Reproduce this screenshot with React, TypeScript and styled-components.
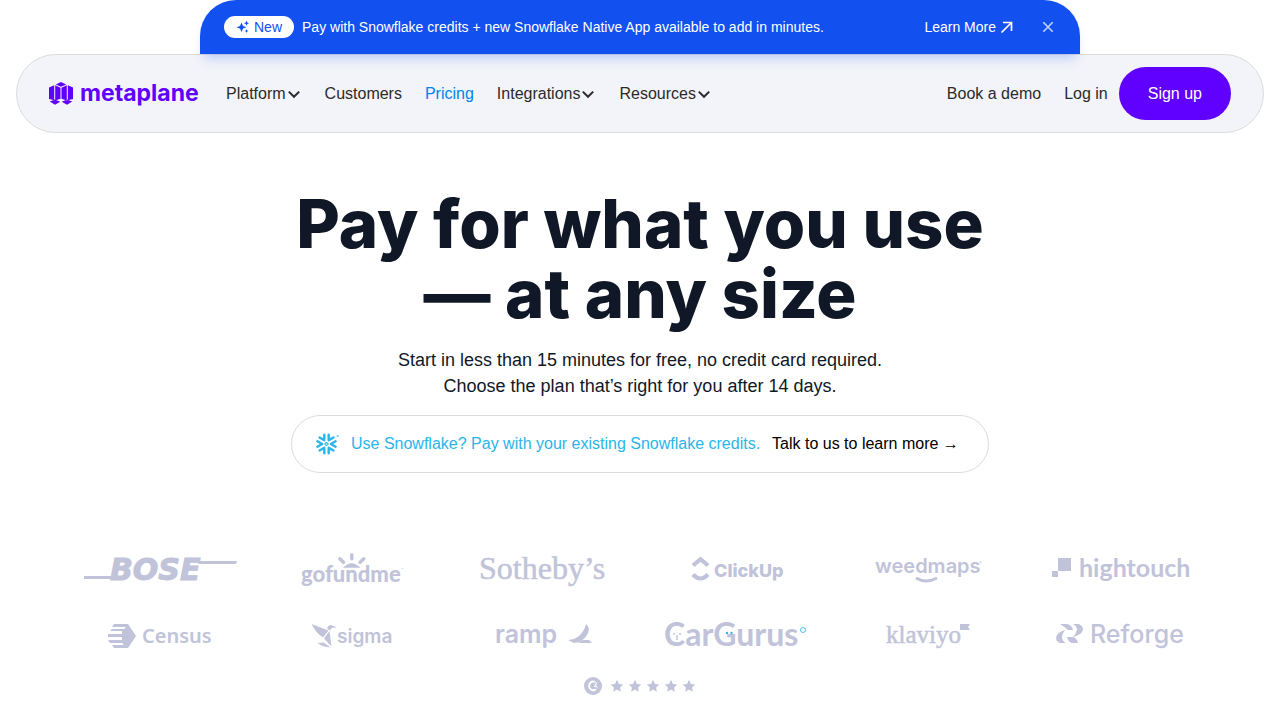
import React from "react";
import styled, { createGlobalStyle } from "styled-components";

const sans = '"Liberation Sans", Arial, sans-serif';
const grotesk = 'Inter, "Liberation Sans", sans-serif';
const muted = "#c0c3d9";

const GlobalStyle = createGlobalStyle`
  *, *::before, *::after { box-sizing: border-box; }
  html { overflow-x: hidden; }
  body { margin: 0; background: #fff; color: #101828; font-family: ${sans}; font-size: 16px; }
  a { color: inherit; text-decoration: none; }
  button { font: inherit; color: inherit; background: none; border: 0; padding: 0; cursor: pointer; }
  svg { display: block; flex: none; }
`;

const Banner = styled.aside`
  position: relative;
  z-index: 1;
  display: flex;
  align-items: center;
  gap: 8px;
  max-width: 880px;
  height: 54px;
  margin: 0 auto;
  padding: 0 24px;
  border-radius: 36px 36px 0 0;
  background: #1250f0;
  color: #fff;
  font-size: 14px;
  box-shadow: 0 8px 12px -4px rgba(18, 80, 240, 0.25);
`;

const NewTag = styled.span`
  display: flex;
  align-items: center;
  gap: 4px;
  height: 22px;
  padding: 0 12px;
  border-radius: 11px;
  background: #fff;
  color: #1250f0;
`;

const BannerText = styled.p`
  flex: 1;
  margin: 0;
`;

const BannerLink = styled.a`
  display: flex;
  align-items: center;
  gap: 4px;
`;

const CloseButton = styled.button`
  margin-left: 18px;
  opacity: 0.75;
`;

const Header = styled.header`
  display: flex;
  align-items: center;
  gap: 26px;
  height: 79px;
  margin: 0 16px;
  padding: 0 32px;
  border: 1px solid #dcdcdc;
  border-radius: 40px;
  background: #f3f4f9;
  color: #2b2b2b;
`;

const Nav = styled.nav`
  display: flex;
  flex: 1;
  align-items: center;
  gap: 23px;
`;

const NavLink = styled.a<{ $active?: boolean }>`
  color: ${(p) => (p.$active ? "#0082f3" : "inherit")};
`;

const NavMenu = styled.button`
  display: flex;
  align-items: center;
`;

const Actions = styled.div`
  display: flex;
  align-items: center;
  gap: 23px;
`;

const AccountLinks = styled.div`
  display: flex;
  align-items: center;
  gap: 11px;
`;

const SignUp = styled.a`
  display: flex;
  align-items: center;
  height: 53px;
  padding: 0 29px;
  border-radius: 27px;
  background: #6000ff;
  color: #fff;
`;

const Hero = styled.section`
  display: flex;
  flex-direction: column;
  align-items: center;
  padding: 56px 24px 64px;
  text-align: center;
`;

const Title = styled.h1`
  margin: 0;
  font-family: ${grotesk};
  font-size: 67px;
  font-weight: 800;
  line-height: 70px;
`;

const Lead = styled.p`
  margin: 18px 0 16px;
  font-size: 18px;
  line-height: 26px;
`;

const CreditsPill = styled.a`
  display: flex;
  align-items: center;
  gap: 12px;
  width: 100%;
  max-width: 698px;
  min-height: 58px;
  padding: 0 24px;
  border: 1px solid #dcdcdc;
  border-radius: 29px;
  color: #000;
`;

const Accent = styled.span`
  color: #29b5e8;
`;

const Customers = styled.ul`
  display: grid;
  grid-template-columns: repeat(6, 1fr);
  margin: 0 64px;
  padding: 0;
  list-style: none;
`;

const Customer = styled.li`
  display: flex;
  align-items: center;
  justify-content: center;
  height: 66px;
`;

const Rating = styled.div`
  display: flex;
  align-items: center;
  justify-content: center;
  gap: 8px;
  padding: 8px 0 24px;
`;

const Stars = styled.div`
  display: flex;
  gap: 4px;
`;

const Logo = ({ children, label }: { children: React.ReactNode; label: string }) => (
  <Customer>
    <svg width="160" height="40" viewBox="0 0 160 40" fill={muted} role="img" aria-label={label} overflow="visible">
      {children}
    </svg>
  </Customer>
);

const Chevron = () => (
  <svg width="16" height="16" viewBox="0 0 16 16" fill="none" stroke="#2b2b2b" strokeWidth="2">
    <path d="M2.800 5.600 8 10.800l5.200-5.200" />
  </svg>
);

const Brand = () => (
  <svg width="151" height="30" viewBox="0 0 151 30" fill="#6000ff" role="img" aria-label="metaplane">
    <path d="M6.800 5.400 12 3l5.200 2.400L12 7.700zM0 8.500 5.200 6.200V21.300L0 20zM24 8.500l-5.200-2.300v15.100L24 20zM6.200 6.300l5.300 2.500v11L6.200 21.600zM17.800 6.300l-5.300 2.500v11l5.300 1.800zM.8 22.600l5-2 5.400 2.200-5.200 3zM12.800 22.800l5.400-2.200 5 2-5.200 3.200z" />
    <text x="31" y="22" fontFamily="Inter" fontSize="23" fontWeight="700">metaplane</text>
  </svg>
);

const Sparkles = () => (
  <svg width="14" height="14" viewBox="0 0 14 14" fill="#1250f0">
    <path d="M5.500 2.500 7 6l3.500 1.300L7 8.600 5.500 12 4 8.600.5 7.300 4 6zM10.500.8l.8 1.600 1.700.8-1.700.8-.8 1.600-.8-1.600L8 3.200l1.700-.8zM10.500 9l.6 1.400 1.400.6-1.400.6-.6 1.400-.6-1.400-1.400-.6 1.400-.6z" />
  </svg>
);

const Snowflake = () => (
  <svg width="23" height="22" viewBox="0 0 23 22" fill="none" stroke="#29b5e8" strokeWidth="2.400" strokeLinecap="round" strokeLinejoin="round">
    {[30, 90, 150, 210, 270, 330].map((angle) => (
      <path key={angle} transform={`rotate(${angle} 10.500 11)`} d="M7.750 1.900 10.500 6.600l2.750-4.700" />
    ))}
    <path d="M10.500 9.300 12.200 11l-1.700 1.700L8.800 11z" strokeWidth="1.100" />
    <circle cx="21.500" cy="3" r=".6" strokeWidth=".6" />
  </svg>
);

const Star = () => (
  <svg width="14" height="14" viewBox="0 0 14 14" fill={muted}>
    <path d="M7 .8 8.900 4.900l4.400.5L10 8.400l.9 4.400L7 10.600l-3.900 2.200L4 8.400.700 5.400l4.400-.5z" />
  </svg>
);

export default function App() {
  return (
    <>
      <GlobalStyle />
      <Banner>
        <NewTag><Sparkles />New</NewTag>
        <BannerText>Pay with Snowflake credits + new Snowflake Native App available to add in minutes.</BannerText>
        <BannerLink href="#">
          Learn More
          <svg width="14" height="14" viewBox="0 0 14 14" fill="none" stroke="#fff" strokeWidth="1.700">
            <path d="M1.500 12.500 11.500 2.500M3 2.500h8.500v8.500" />
          </svg>
        </BannerLink>
        <CloseButton aria-label="Close">
          <svg width="16" height="16" viewBox="0 0 16 16" stroke="#fff" strokeWidth="1.600">
            <path d="m3.300 3.300 9.400 9.400m0-9.400-9.400 9.400" />
          </svg>
        </CloseButton>
      </Banner>
      <Header>
        <a href="#"><Brand /></a>
        <Nav>
          <NavMenu>Platform<Chevron /></NavMenu>
          <NavLink href="#">Customers</NavLink>
          <NavLink href="#" $active>Pricing</NavLink>
          <NavMenu>Integrations<Chevron /></NavMenu>
          <NavMenu>Resources<Chevron /></NavMenu>
        </Nav>
        <Actions>
          <NavLink href="#">Book a demo</NavLink>
          <AccountLinks>
            <NavLink href="#">Log in</NavLink>
            <SignUp href="#">Sign up</SignUp>
          </AccountLinks>
        </Actions>
      </Header>
      <main>
        <Hero>
          <Title>Pay for what you use<br />— at any size</Title>
          <Lead>
            Start in less than 15 minutes for free, no credit card required.<br />
            Choose the plan that’s right for you after 14 days.
          </Lead>
          <CreditsPill href="#">
            <Snowflake />
            <Accent>Use Snowflake? Pay with your existing Snowflake credits.</Accent>
            <span>Talk to us to learn more →</span>
          </CreditsPill>
        </Hero>
        <Customers>
          <Logo label="Bose">
            <path d="M4 26h33l-2 3H4zM119 11h38l-1 3h-38z" />
            <text x="30" y="30" fontFamily="DejaVu Sans" fontWeight="700" fontStyle="italic" fontSize="30" stroke={muted} strokeWidth="1">BOSE</text>
          </Logo>
          <Logo label="GoFundMe">
            <text x="29" y="32" fontFamily="Lato" fontWeight="900" fontSize="22">gofundme</text>
            <path d="M71 17.800Q79.500 8.500 88.500 17.800z" />
            <path d="M79.800 4.800v4M67.800 8.800l3.700 3.500M91.800 8.800l-3.700 3.500" stroke={muted} strokeWidth="3.400" strokeLinecap="round" />
            <text x="129" y="21" fontFamily="Inter" fontSize="4">™</text>
          </Logo>
          <Logo label="Sotheby’s">
            <text x="15" y="29" fontFamily="Liberation Serif" fontSize="32" stroke={muted} strokeWidth=".5">Sotheby’s</text>
          </Logo>
          <Logo label="ClickUp">
            <path d="m37 15.500 7.500-6.300 7.500 6.300M37 24.500q7.500 8 15 0" fill="none" stroke={muted} strokeWidth="4.200" />
            <text x="58" y="27" fontFamily="Inter" fontWeight="800" fontSize="18">ClickUp</text>
          </Logo>
          <Logo label="Weedmaps">
            <text x="27" y="23" fontFamily="Inter" fontWeight="600" fontSize="20">weedmaps</text>
            <path d="M68 28q10 6 21 0" fill="none" stroke={muted} strokeWidth="3" />
            <text x="131" y="14" fontFamily="Inter" fontSize="4">®</text>
          </Logo>
          <Logo label="Hightouch">
            <path d="M18 8h13v13H18zM12 21h6v6h-6z" />
            <text x="39" y="27" fontFamily="Lato" fontWeight="700" fontSize="25">hightouch</text>
          </Logo>
          <Logo label="Census">
            <path d="M34 8h14l8 12-8 12H34l-2-3h12l-2-2H30l-2-3h14v-3H28v-3h14v-3H30l2-2h12l2-2H32z" />
            <text x="62" y="27" fontFamily="Noto Sans" fontWeight="600" fontSize="20">Census</text>
          </Logo>
          <Logo label="Sigma">
            <path d="m39.500 8 17 6.500L51 21.500q-7-4.500-11.500-13.500zM52 22.500l5.500-7.500 2 15.500zM45.500 27l6-.5 7 5q-8-.5-13-4.500zM55 12.500q1-3.500 4-3.500l6 2.500-5 .2-2 2.800z" />
            <text x="65" y="27" fontFamily="Inter" fontWeight="600" fontSize="19">sigma</text>
          </Logo>
          <Logo label="Ramp">
            <text x="31" y="27" fontFamily="Inter" fontWeight="600" fontSize="25">ramp</text>
            <path d="M122 8q5 4 1 11-4 7-13 8l-6-3q14-1 18-16zM119 24h6l3 3h-14z" />
          </Logo>
          <Logo label="CarGurus">
            <text x="8" y="30" fontFamily="Lato" fontWeight="700" fontSize="32">CarGurus</text>
            <path d="M17 18h2M23 18h2M21 19v5" stroke={muted} strokeWidth="1.500" />
            <g fill="#29b5e8">
              <circle cx="71" cy="17" r="1.200" />
              <circle cx="75.500" cy="17" r="1.200" />
            </g>
            <circle cx="147" cy="14" r="2.500" fill="none" stroke="#29b5e8" strokeWidth=".8" />
          </Logo>
          <Logo label="Klaviyo">
            <text x="38" y="27" fontFamily="Liberation Serif" fontSize="25" stroke={muted} strokeWidth=".5">klaviyo</text>
            <path d="M112 8h10l-2 3 2 3h-10z" />
          </Logo>
          <Logo label="Reforge">
            <path d="M20 8h7q5 1 6 6l-5 0q-3-3-8-6zM33 8h6q6 3 3 8-2 3-9 5 3-3 4-7 0-4-4-6zM26 27h-6q-6-3-3-8 2-3 8-5-3 4-3 7 0 4 4 6zM27 21h6q4 1 5 6h-6q-4-1-5-6z" />
            <text x="50" y="27" fontFamily="Inter" fontWeight="500" fontSize="25">Reforge</text>
          </Logo>
        </Customers>
        <Rating role="img" aria-label="Five stars on G2">
          <svg width="18" height="18" viewBox="0 0 18 18">
            <circle cx="9" cy="9" r="9" fill={muted} />
            <path d="M10.500 4.800A4.300 4.300 0 1 0 12 12.300" fill="none" stroke="#fff" strokeWidth="2" />
            <path d="M10.500 5.500q1.500-1 2 0t-1.800 2.500h2.300M10 9.500h2.500l1.300 2" fill="none" stroke="#fff" strokeWidth="1" />
          </svg>
          <Stars><Star /><Star /><Star /><Star /><Star /></Stars>
        </Rating>
      </main>
    </>
  );
}
